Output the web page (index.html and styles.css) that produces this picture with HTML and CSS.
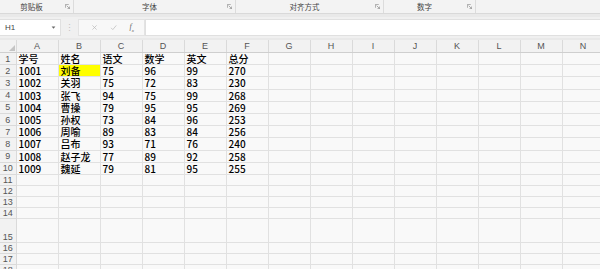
FILE: index.html
```html
<!DOCTYPE html>
<html lang="zh-CN">
<head>
    <meta charset="UTF-8">
    <title>Sheet1</title>
    <link rel="stylesheet" href="styles.css">
</head>
<body>
    <div class="ribbon">
        <div class="group g-clip"><span class="group-label">剪贴板</span><svg class="launcher" viewBox="0 0 6 6"><path d="M0.5 0.5h4M0.5 0.5v4M2 2l3.5 3.5M3 5.5h2.5v-2.5" fill="none" stroke="#888" stroke-width="0.8"/></svg></div>
        <div class="group g-font"><span class="group-label">字体</span><svg class="launcher" viewBox="0 0 6 6"><path d="M0.5 0.5h4M0.5 0.5v4M2 2l3.5 3.5M3 5.5h2.5v-2.5" fill="none" stroke="#888" stroke-width="0.8"/></svg></div>
        <div class="group g-align"><span class="group-label">对齐方式</span><svg class="launcher" viewBox="0 0 6 6"><path d="M0.5 0.5h4M0.5 0.5v4M2 2l3.5 3.5M3 5.5h2.5v-2.5" fill="none" stroke="#888" stroke-width="0.8"/></svg></div>
        <div class="group g-num"><span class="group-label">数字</span><svg class="launcher" viewBox="0 0 6 6"><path d="M0.5 0.5h4M0.5 0.5v4M2 2l3.5 3.5M3 5.5h2.5v-2.5" fill="none" stroke="#888" stroke-width="0.8"/></svg></div>
    </div>

    <div class="formula-bar">
        <div class="name-box">
            <span>H1</span>
            <svg class="dropdown" viewBox="0 0 6 4"><path d="M0.5 0.5h5L3 3.5z" fill="#666"/></svg>
        </div>
        <div class="grip">⋮</div>
        <div class="fx-buttons">
            <svg class="fx-icon" viewBox="0 0 10 10"><path d="M2 2l6 6M8 2l-6 6" stroke="#b9b9b9" stroke-width="1"/></svg>
            <svg class="fx-icon" viewBox="0 0 10 10"><path d="M1.5 5.5l2.5 2.5 5-6" fill="none" stroke="#b9b9b9" stroke-width="1"/></svg>
            <span class="fx-label">f<sub>x</sub></span>
        </div>
        <div class="formula-input"></div>
    </div>

    <table class="sheet">
        <colgroup>
            <col class="c-head">
            <col><col><col><col><col><col><col><col><col><col><col><col><col><col>
        </colgroup>
        <tr class="col-heads">
            <th class="corner"><svg viewBox="0 0 6 6"><path d="M6 0v6H0z" fill="#c4c4c4"/></svg></th>
            <th>A</th><th>B</th><th>C</th><th>D</th><th>E</th><th>F</th><th>G</th><th>H</th><th>I</th><th>J</th><th>K</th><th>L</th><th>M</th><th>N</th>
        </tr>
        <tr class="r-data"><th>1</th><td>学号</td><td>姓名</td><td>语文</td><td>数学</td><td>英文</td><td>总分</td><td></td><td></td><td></td><td></td><td></td><td></td><td></td><td></td></tr>
        <tr class="r-data"><th>2</th><td>1001</td><td class="fill-yellow">刘备</td><td>75</td><td>96</td><td>99</td><td>270</td><td></td><td></td><td></td><td></td><td></td><td></td><td></td><td></td></tr>
        <tr class="r-data"><th>3</th><td>1002</td><td>关羽</td><td>75</td><td>72</td><td>83</td><td>230</td><td></td><td></td><td></td><td></td><td></td><td></td><td></td><td></td></tr>
        <tr class="r-data"><th>4</th><td>1003</td><td>张飞</td><td>94</td><td>75</td><td>99</td><td>268</td><td></td><td></td><td></td><td></td><td></td><td></td><td></td><td></td></tr>
        <tr class="r-data"><th>5</th><td>1004</td><td>曹操</td><td>79</td><td>95</td><td>95</td><td>269</td><td></td><td></td><td></td><td></td><td></td><td></td><td></td><td></td></tr>
        <tr class="r-data"><th>6</th><td>1005</td><td>孙权</td><td>73</td><td>84</td><td>96</td><td>253</td><td></td><td></td><td></td><td></td><td></td><td></td><td></td><td></td></tr>
        <tr class="r-data"><th>7</th><td>1006</td><td>周喻</td><td>89</td><td>83</td><td>84</td><td>256</td><td></td><td></td><td></td><td></td><td></td><td></td><td></td><td></td></tr>
        <tr class="r-data"><th>8</th><td>1007</td><td>吕布</td><td>93</td><td>71</td><td>76</td><td>240</td><td></td><td></td><td></td><td></td><td></td><td></td><td></td><td></td></tr>
        <tr class="r-data"><th>9</th><td>1008</td><td>赵子龙</td><td>77</td><td>89</td><td>92</td><td>258</td><td></td><td></td><td></td><td></td><td></td><td></td><td></td><td></td></tr>
        <tr class="r-data"><th>10</th><td>1009</td><td>魏延</td><td>79</td><td>81</td><td>95</td><td>255</td><td></td><td></td><td></td><td></td><td></td><td></td><td></td><td></td></tr>
        <tr class="r-empty"><th>11</th><td></td><td></td><td></td><td></td><td></td><td></td><td></td><td></td><td></td><td></td><td></td><td></td><td></td><td></td></tr>
        <tr class="r-empty"><th>12</th><td></td><td></td><td></td><td></td><td></td><td></td><td></td><td></td><td></td><td></td><td></td><td></td><td></td><td></td></tr>
        <tr class="r-empty"><th>13</th><td></td><td></td><td></td><td></td><td></td><td></td><td></td><td></td><td></td><td></td><td></td><td></td><td></td><td></td></tr>
        <tr class="r-empty"><th>14</th><td></td><td></td><td></td><td></td><td></td><td></td><td></td><td></td><td></td><td></td><td></td><td></td><td></td><td></td></tr>
        <tr class="r-tall"><th>15</th><td></td><td></td><td></td><td></td><td></td><td></td><td></td><td></td><td></td><td></td><td></td><td></td><td></td><td></td></tr>
        <tr class="r-empty"><th>16</th><td></td><td></td><td></td><td></td><td></td><td></td><td></td><td></td><td></td><td></td><td></td><td></td><td></td><td></td></tr>
        <tr class="r-empty"><th>17</th><td></td><td></td><td></td><td></td><td></td><td></td><td></td><td></td><td></td><td></td><td></td><td></td><td></td><td></td></tr>
        <tr class="r-empty"><th>18</th><td></td><td></td><td></td><td></td><td></td><td></td><td></td><td></td><td></td><td></td><td></td><td></td><td></td><td></td></tr>
    </table>
</body>
</html>
```

FILE: styles.css
```css
* {
    margin: 0;
    padding: 0;
    box-sizing: border-box;
}

body {
    font-family: "Noto Sans CJK SC", "Noto Sans", sans-serif;
    background: #e9e9e9;
    width: 600px;
    height: 269px;
    overflow: hidden;
}

/* ribbon group labels */
.ribbon {
    height: 14px;
    background: #f3f3f3;
    border-bottom: 1px solid #d9d9d9;
    display: flex;
}

.group {
    height: 13px;
    display: flex;
    align-items: center;
    justify-content: center;
    position: relative;
    border-right: 1px solid #dcdcdc;
    padding-right: 10px;
}

.g-clip { width: 74px; }
.g-font { width: 162px; }
.g-align { width: 148px; }
.g-num { width: 92px; }

.group-label {
    font-size: 7.5px;
    line-height: 1;
    color: #444;
}

.launcher {
    position: absolute;
    right: 3px;
    top: 4px;
    width: 5px;
    height: 5px;
}

/* formula bar */
.formula-bar {
    margin-top: 3px;
    height: 21px;
    background: #f0f0f0;
    display: flex;
    align-items: center;
    padding: 2px 0;
}

.name-box {
    width: 61px;
    height: 17px;
    background: #fff;
    border: 1px solid #e0e0e0;
    border-left: none;
    display: flex;
    align-items: center;
    justify-content: space-between;
    padding: 0 4px 0 5px;
    font-family: "Liberation Sans", sans-serif;
    font-size: 8px;
    color: #444;
}

.dropdown {
    width: 5px;
    height: 3px;
}

.grip {
    width: 17px;
    text-align: center;
    color: #c2c2c2;
    font-size: 9px;
}

.fx-buttons {
    width: 67px;
    height: 17px;
    background: #f8f8f8;
    border: 1px solid #e3e3e3;
    display: flex;
    align-items: center;
    justify-content: space-around;
    padding: 0 4px 0 6px;
}

.fx-icon {
    width: 7px;
    height: 7px;
}

.fx-label {
    font-family: "Liberation Serif", serif;
    font-style: italic;
    font-size: 8px;
    color: #666;
}

.fx-label sub {
    font-size: 5px;
}

.formula-input {
    flex: 1;
    height: 17px;
    background: #fff;
    border: 1px solid #e0e0e0;
    border-right: none;
}

/* grid */
.sheet {
    margin-top: 2px;
    border-collapse: collapse;
    table-layout: fixed;
    width: 604px;
    background: #f9f9f9;
}

.sheet col {
    width: 42px;
}

.sheet col.c-head {
    width: 16px;
}

.sheet td,
.sheet th {
    border: 1px solid #e1e1e1;
    padding: 0;
    overflow: hidden;
    white-space: nowrap;
}

.sheet th {
    background: #f2f2f2;
    color: #555;
    font-family: "Liberation Sans", sans-serif;
    font-weight: normal;
    font-size: 9px;
    line-height: 10px;
    border-color: #dadada;
}

.col-heads th {
    height: 12.5px;
    line-height: 11px;
    border-bottom: 1px solid #cfcfcf;
    border-top: none;
}

.sheet tr th:first-child {
    text-align: center;
    border-left: none;
}

.col-heads .corner {
    text-align: right;
    vertical-align: bottom;
    padding: 0 1px 1px 0;
}

.corner svg {
    width: 6px;
    height: 6px;
    display: block;
    margin-left: auto;
}

.sheet td {
    font-size: 10px;
    font-weight: 500;
    line-height: 11px;
    color: #000;
    padding-left: 2px;
    vertical-align: middle;
}

.r-data th,
.r-data td {
    height: 12.2px;
}

.r-empty th,
.r-empty td {
    height: 11.1px;
}

.r-tall th,
.r-tall td {
    height: 24px;
}

.r-tall th {
    vertical-align: bottom;
}

.fill-yellow {
    background: #ffff00;
}
```
